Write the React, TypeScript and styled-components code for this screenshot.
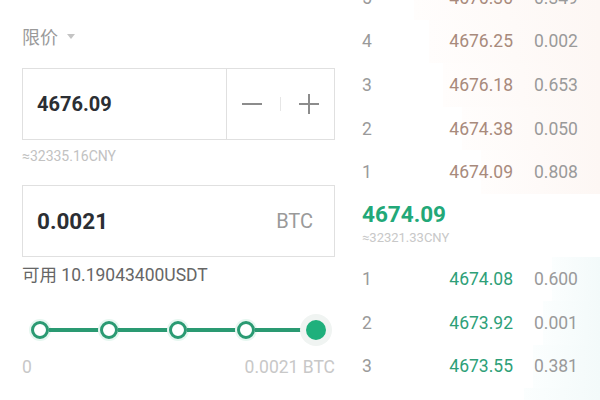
import React from "react";
import styled, { createGlobalStyle } from "styled-components";

const Global = createGlobalStyle`
  html, body { margin: 0; padding: 0; background: #fff; }
  body { font-family: Roboto, "Noto Sans CJK SC", "Liberation Sans", sans-serif; }
  * { box-sizing: border-box; }
`;

const Page = styled.div`
  width: 600px;
  height: 400px;
  overflow: hidden;
  display: flex;
  background: #fff;
`;

const Left = styled.div`
  width: 335px;
  flex: none;
  padding-left: 22px;
  display: flex;
  flex-direction: column;
`;

const TypeRow = styled.div`
  flex: none;
  height: 26px;
  margin-top: 23px;
  display: flex;
  align-items: center;
  gap: 9px;
  color: #9a9a9a;
  font-size: 18px;
`;

const Caret = styled.span`
  width: 0;
  height: 0;
  border-left: 4px solid transparent;
  border-right: 4px solid transparent;
  border-top: 5px solid #c4c4c4;
  margin-top: 1px;
`;

const InputBox = styled.div<{ $top: number }>`
  flex: none;
  margin-top: ${(p) => p.$top}px;
  height: 72px;
  border: 1px solid #e0e0e0;
  display: flex;
  align-items: center;
`;

const Value = styled.div<{ $size: number }>`
  flex: 1;
  padding-left: 14px;
  font-size: ${(p) => p.$size}px;
  font-weight: 700;
  color: #2b2e33;
`;

const Stepper = styled.div`
  width: 108px;
  height: 100%;
  border-left: 1px solid #e0e0e0;
  display: flex;
  align-items: center;
  justify-content: space-around;
  padding: 0 6px;
`;

const StepSep = styled.div`
  width: 1px;
  height: 14px;
  background: #e6e6e6;
`;

const Unit = styled.div`
  padding-right: 21px;
  font-size: 20px;
  color: #9a9a9a;
`;

const Hint = styled.div`
  flex: none;
  margin-top: 8px;
  font-size: 14px;
  color: #c2c2c2;
  height: 16px;
  line-height: 16px;
`;

const Avail = styled.div`
  flex: none;
  margin-top: 7px;
  font-size: 17.5px;
  color: #666;
  line-height: 22px;
`;

const Slider = styled.div`
  flex: none;
  margin-top: 29px;
  height: 30px;
  display: flex;
  align-items: center;
  padding-left: 9px;
  width: 304px;
`;

const Node = styled.div<{ $filled?: boolean }>`
  flex: none;
  width: ${(p) => (p.$filled ? 20 : 18)}px;
  height: ${(p) => (p.$filled ? 20 : 18)}px;
  border-radius: 50%;
  border: 3px solid;
  background: ${(p) => (p.$filled ? "#1fb07c" : "#fff")};
  border-color: ${(p) => (p.$filled ? "#1fb07c" : "#2a9a72")};
  box-shadow: ${(p) => (p.$filled ? "0 0 0 6px #f0f4f2" : "0 0 0 2px #e6f7f0")};
`;

const Track = styled.div`
  flex: 1;
  height: 4px;
  background: #2a9a72;
`;

const SliderLabels = styled.div`
  flex: none;
  margin-top: 12px;
  width: 313px;
  display: flex;
  justify-content: space-between;
  font-size: 17.5px;
  color: #c8c8c8;
`;

const Right = styled.div`
  flex: 1;
  display: flex;
  flex-direction: column;
  padding-left: 27px;
  margin-top: -24px;
  position: relative;
`;

const Row = styled.div<{ $depth: number; $side: "ask" | "bid" }>`
  flex: none;
  height: 43.6px;
  display: flex;
  align-items: center;
  font-size: 17.5px;
  position: relative;
  &::before {
    content: "";
    position: absolute;
    right: 0;
    top: 0;
    bottom: 0;
    width: ${(p) => p.$depth}%;
    background: ${(p) =>
      p.$side === "ask"
        ? "linear-gradient(90deg, #fffdfc, #fdf7f4)"
        : "linear-gradient(90deg, #fbfefe, #f3fafa)"};
    z-index: 0;
  }
  & > * { position: relative; z-index: 1; }
`;

const Idx = styled.div`
  width: 63px;
  color: #9a9a9a;
`;

const Price = styled.div<{ $side: "ask" | "bid" }>`
  width: 88px;
  text-align: right;
  color: ${(p) => (p.$side === "ask" ? "#a88a7c" : "#2e9f78")};
`;

const Qty = styled.div`
  margin-left: 21px;
  color: #9a9a9a;
`;

const Mid = styled.div`
  flex: none;
  height: 63.5px;
  display: flex;
  flex-direction: column;
  padding-top: 7px;
`;

const MidPrice = styled.div`
  font-size: 22.5px;
  font-weight: 700;
  color: #22a878;
  line-height: 26px;
`;

const MidCny = styled.div`
  margin-top: 3px;
  font-size: 13px;
  line-height: 16px;
  color: #c8c8c8;
`;

const Minus = () => (
  <svg width="22" height="22" viewBox="0 0 22 22">
    <line x1="1" y1="11" x2="21" y2="11" stroke="#8c8c8c" strokeWidth="2" />
  </svg>
);
const Plus = () => (
  <svg width="22" height="22" viewBox="0 0 22 22">
    <line x1="1" y1="11" x2="21" y2="11" stroke="#8c8c8c" strokeWidth="2" />
    <line x1="11" y1="1" x2="11" y2="21" stroke="#8c8c8c" strokeWidth="2" />
  </svg>
);

const asks = [
  { i: 5, p: "4676.30", q: "0.349", d: 78 },
  { i: 4, p: "4676.25", q: "0.002", d: 72 },
  { i: 3, p: "4676.18", q: "0.653", d: 66 },
  { i: 2, p: "4674.38", q: "0.050", d: 58 },
  { i: 1, p: "4674.09", q: "0.808", d: 50 },
];
const bids = [
  { i: 1, p: "4674.08", q: "0.600", d: 20 },
  { i: 2, p: "4673.92", q: "0.001", d: 24 },
  { i: 3, p: "4673.55", q: "0.381", d: 28 },
  { i: 4, p: "4673.08", q: "0.051", d: 32 },
];

export default function App() {
  return (
    <>
      <Global />
      <Page>
        <Left>
          <TypeRow>
            限价 <Caret />
          </TypeRow>
          <InputBox $top={19}>
            <Value $size={20}>4676.09</Value>
            <Stepper>
              <Minus />
              <StepSep />
              <Plus />
            </Stepper>
          </InputBox>
          <Hint>≈32335.16CNY</Hint>
          <InputBox $top={21}>
            <Value $size={22.5}>0.0021</Value>
            <Unit>BTC</Unit>
          </InputBox>
          <Avail>可用 10.19043400USDT</Avail>
          <Slider>
            <Node />
            <Track />
            <Node />
            <Track />
            <Node />
            <Track />
            <Node />
            <Track />
            <Node $filled />
          </Slider>
          <SliderLabels>
            <span>0</span>
            <span>0.0021 BTC</span>
          </SliderLabels>
        </Left>
        <Right>
          {asks.map((r) => (
            <Row key={"a" + r.i} $depth={r.d} $side="ask">
              <Idx>{r.i}</Idx>
              <Price $side="ask">{r.p}</Price>
              <Qty>{r.q}</Qty>
            </Row>
          ))}
          <Mid>
            <MidPrice>4674.09</MidPrice>
            <MidCny>≈32321.33CNY</MidCny>
          </Mid>
          {bids.map((r) => (
            <Row key={"b" + r.i} $depth={r.d} $side="bid">
              <Idx>{r.i}</Idx>
              <Price $side="bid">{r.p}</Price>
              <Qty>{r.q}</Qty>
            </Row>
          ))}
        </Right>
      </Page>
    </>
  );
}
